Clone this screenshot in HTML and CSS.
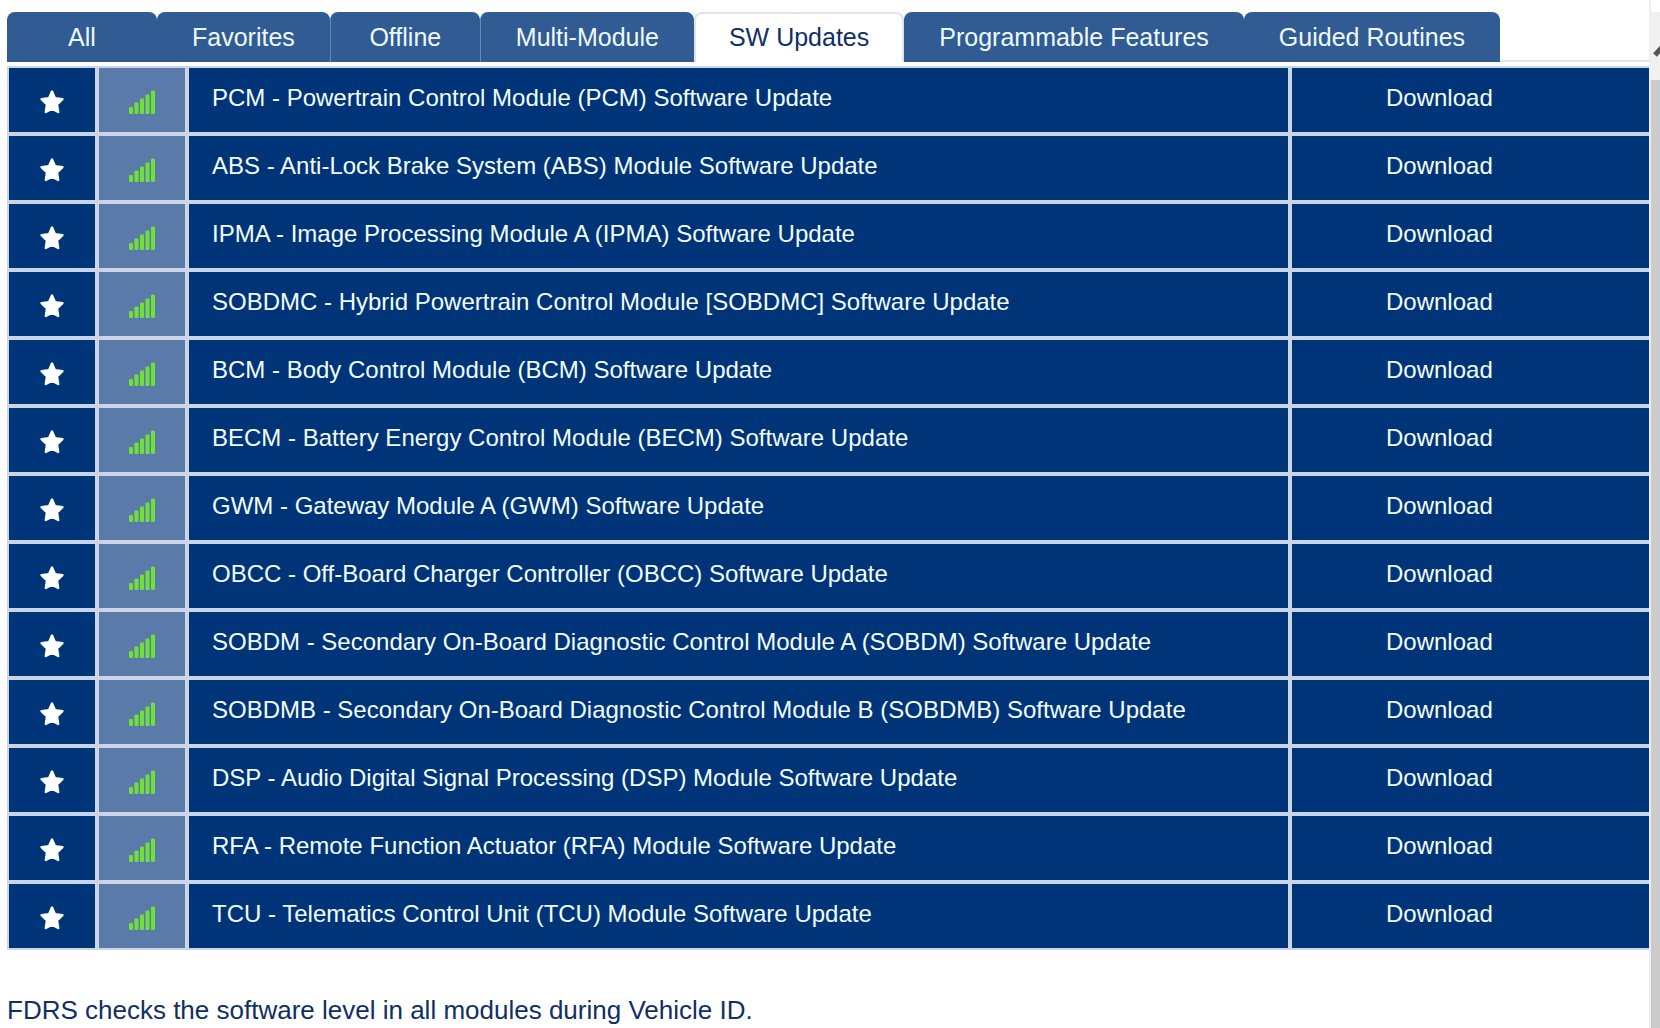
FILE: index.html
```
<!DOCTYPE html>
<html lang="en">
<head>
<meta charset="utf-8">
<title>FDRS - SW Updates</title>
<link rel="stylesheet" href="styles.css">
</head>
<body>
<svg class="sprite" aria-hidden="true">
  <symbol id="star" viewBox="0 0 24 24"><path d="M12 1.6 15 8.2 22.4 9.2 17 14.5 18.2 22 12 18.8 5.8 22 7 14.5 1.6 9.2 9 8.2Z" fill="#fff" stroke="#fff" stroke-width="2.4" stroke-linejoin="round"/></symbol>
  <symbol id="signal" viewBox="0 0 28 26"><g fill="#70e038"><rect x="1" y="18" width="4" height="7" rx="1"/><rect x="6.500" y="13.500" width="4" height="11.500" rx="1"/><rect x="12" y="9.500" width="4" height="15.500" rx="1"/><rect x="17.500" y="5.500" width="4" height="19.500" rx="1"/><rect x="23" y="1.500" width="4" height="23.500" rx="1"/></g></symbol>
</svg>
<main class="content">
  <div class="tabs" role="tablist">
    <button class="tab" role="tab">All</button>
    <button class="tab" role="tab">Favorites</button>
    <button class="tab divided" role="tab">Offline</button>
    <button class="tab divided" role="tab">Multi-Module</button>
    <button class="tab active" role="tab" aria-selected="true">SW Updates</button>
    <button class="tab" role="tab">Programmable Features</button>
    <button class="tab" role="tab">Guided Routines</button>
  </div>
  <table class="modules">
    <colgroup><col class="col-icon"><col class="col-icon"><col><col class="col-action"></colgroup>
    <tbody id="rows"></tbody>
  </table>
  <p class="note">FDRS checks the software level in all modules during Vehicle ID.</p>
</main>
<div class="scroll">
  <button class="scroll-up" aria-label="Scroll up"><svg width="22" height="24" viewBox="0 0 22 24"><path d="M2 21 11 11 20 21" fill="none" stroke="#555" stroke-width="5"/></svg></button>
</div>
<script src="app.js"></script>
</body>
</html>
```
FILE: app.js
```
const modules = [
  "PCM - Powertrain Control Module (PCM) Software Update",
  "ABS - Anti-Lock Brake System (ABS) Module Software Update",
  "IPMA - Image Processing Module A (IPMA) Software Update",
  "SOBDMC - Hybrid Powertrain Control Module [SOBDMC] Software Update",
  "BCM - Body Control Module (BCM) Software Update",
  "BECM - Battery Energy Control Module (BECM) Software Update",
  "GWM - Gateway Module A (GWM) Software Update",
  "OBCC - Off-Board Charger Controller (OBCC) Software Update",
  "SOBDM - Secondary On-Board Diagnostic Control Module A (SOBDM) Software Update",
  "SOBDMB - Secondary On-Board Diagnostic Control Module B (SOBDMB) Software Update",
  "DSP - Audio Digital Signal Processing (DSP) Module Software Update",
  "RFA - Remote Function Actuator (RFA) Module Software Update",
  "TCU - Telematics Control Unit (TCU) Module Software Update"
];
document.getElementById("rows").innerHTML = modules.map(name => `
  <tr>
    <td class="favorite"><button class="star" aria-label="Favorite"><svg class="icon-star"><use href="#star"/></svg></button></td>
    <td class="status"><svg class="icon-signal" role="img" aria-label="Online"><use href="#signal"/></svg></td>
    <td class="name">${name}</td>
    <td class="action"><button class="download">Download</button></td>
  </tr>`).join("");
```
FILE: styles.css
```
* { box-sizing: border-box; }
body {
  margin: 0;
  display: flex;
  min-height: 100vh;
  overflow-x: hidden;
  background: #fff;
  color: #0f2f66;
  font-family: "Liberation Sans", Arial, sans-serif;
  font-size: 24px;
}
button {
  border: 0;
  padding: 0;
  background: none;
  color: inherit;
  font: inherit;
  cursor: pointer;
}
.sprite { position: absolute; width: 0; height: 0; }
.content { flex: 1; min-width: 0; padding: 12px 0 0 7px; }

.tabs { display: flex; height: 50px; border-bottom: 2px solid #e4e5e9; }
.tab {
  height: 50px;
  min-width: 150px;
  padding: 0 35px;
  border-radius: 8px 8px 0 0;
  background: #305c93;
  color: #eef9ff;
  font-size: 25px;
  white-space: nowrap;
}
.tab.divided { border-left: 1px solid #6288b4; }
.tab.active {
  border: 2px solid #e0e4ea;
  border-bottom: 0;
  padding: 0 33px 2px;
  background: #fff;
  color: #0f2f66;
}

.modules {
  width: 100%;
  margin-top: 4px;
  table-layout: fixed;
  border-collapse: separate;
  border-spacing: 0;
}
.col-icon { width: 90px; }
.col-action { width: 359px; }
.modules td {
  height: 68px;
  padding: 0;
  border: 2px solid #cbd5e3;
  background: #003478;
  color: #f2fdff;
}
.modules td:last-child { border-right: 0; }
.modules .favorite, .modules .status { padding-top: 3px; text-align: center; }
.modules .status { background: #5a7aa9; }
.modules .name { padding: 0 23px 4px; }
.modules .action { padding: 0 94px 4px; }
.star, .icon-star, .icon-signal { display: block; margin: 0 auto; }
.icon-star { width: 24px; height: 24px; }
.icon-signal { width: 28px; height: 26px; }

.note { margin: 45px 0 0; font-size: 26px; line-height: 30px; }

.scroll { flex: 0 0 11px; padding-top: 12px; border-left: 2px solid #e9eef4; background: linear-gradient(#fff 12px, #cbcbcb 12px); }
.scroll-up {
  display: flex;
  align-items: center;
  width: 11px;
  height: 68px;
  margin-left: -2px;
  padding-left: 4px;
  overflow: hidden;
  background: #f0f0f0;
}
.scroll-up svg { flex: none; }
```
